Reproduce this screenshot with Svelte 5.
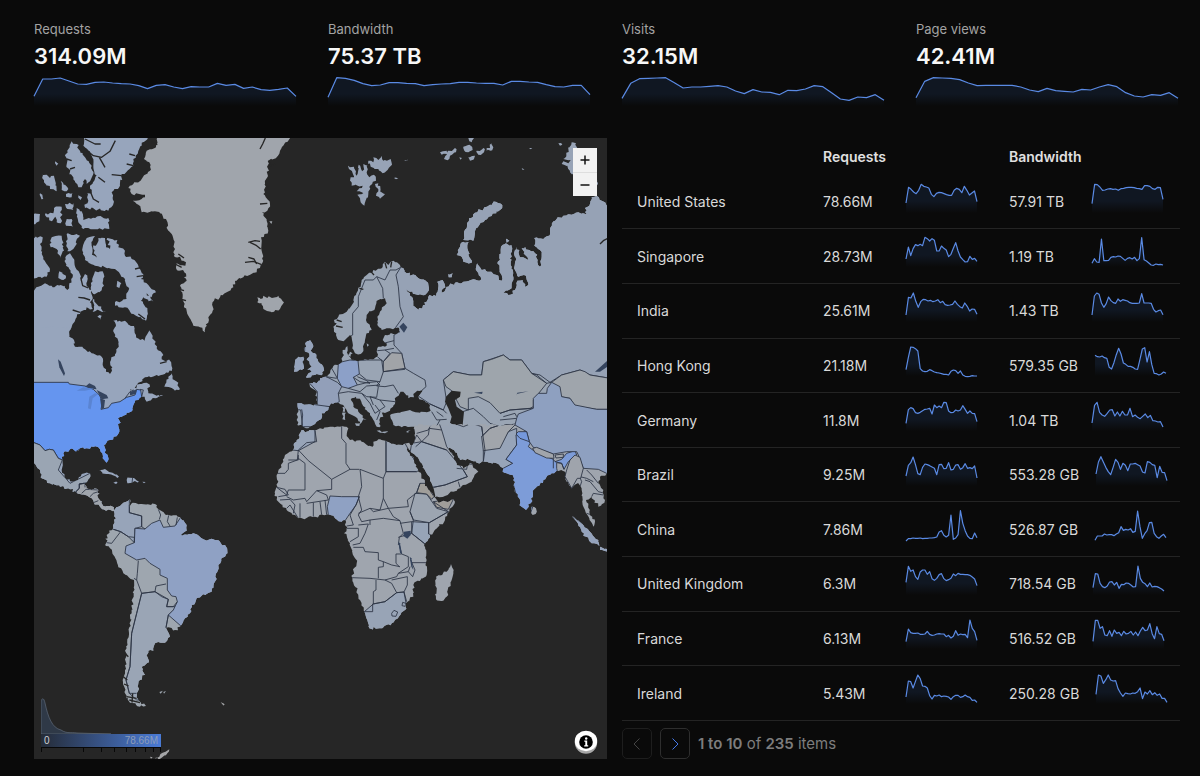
<script>
    let page = $state(1);

    const stats = [
        { label: 'Requests', value: '314.09M', points: [61, 9, 9, 6, 15, 24, 25, 19, 18, 21, 23, 24, 29, 38, 28, 26, 33, 38, 32, 33, 33, 22, 28, 25, 37, 33, 41, 43, 40, 36, 61] },
        { label: 'Bandwidth', value: '75.37 TB', points: [64, 5, 7, 13, 23, 29, 27, 20, 20, 22, 23, 29, 26, 24, 23, 19, 19, 21, 22, 22, 27, 16, 16, 18, 19, 26, 32, 33, 28, 28, 56] },
        { label: 'Visits', value: '32.15M', points: [67, 22, 8, 7, 6, 5, 20, 36, 33, 33, 31, 29, 33, 45, 53, 41, 48, 49, 56, 43, 44, 39, 29, 32, 50, 69, 73, 63, 65, 56, 73] },
        { label: 'Page views', value: '42.41M', points: [65, 16, 5, 6, 7, 11, 21, 29, 28, 28, 28, 28, 33, 42, 47, 37, 44, 46, 48, 40, 42, 33, 26, 32, 50, 60, 63, 56, 58, 50, 67] }
    ];

    const rows = [
        {
            country: 'United States', requests: '78.66M', bandwidth: '57.91 TB',
            reqPoints: [60, 13, 19, 27, 32, 22, 4, 10, 12, 15, 34, 41, 31, 28, 29, 32, 35, 37, 37, 22, 16, 19, 29, 10, 22, 36, 30, 24, 56],
            bwPoints: [62, 4, 5, 12, 22, 21, 18, 17, 19, 18, 22, 17, 16, 14, 13, 13, 14, 16, 17, 19, 8, 8, 10, 17, 19, 13, 14, 49]
        },
        {
            country: 'Singapore', requests: '28.73M', bandwidth: '1.19 TB',
            reqPoints: [66, 30, 56, 35, 23, 26, 22, 26, 1, 5, 12, 5, 10, 42, 42, 27, 34, 39, 59, 52, 34, 17, 42, 60, 68, 75, 74, 58, 67, 64, 73],
            bwPoints: [79, 65, 75, 76, 6, 71, 71, 70, 61, 59, 60, 57, 58, 64, 70, 64, 62, 66, 61, 71, 65, 2, 68, 72, 78, 84, 85, 81, 83, 82, 84]
        },
        {
            country: 'India', requests: '25.61M', bandwidth: '1.43 TB',
            reqPoints: [69, 16, 18, 3, 28, 46, 29, 22, 23, 27, 25, 29, 27, 23, 32, 28, 38, 40, 39, 37, 27, 37, 44, 48, 33, 43, 57, 51, 52, 67],
            bwPoints: [69, 12, 3, 7, 33, 46, 35, 15, 26, 32, 34, 21, 28, 23, 25, 27, 32, 34, 34, 34, 33, 5, 33, 33, 33, 34, 52, 60, 56, 54, 68]
        },
        {
            country: 'Hong Kong', requests: '21.18M', bandwidth: '579.35 GB',
            reqPoints: [71, 34, 3, 4, 8, 15, 68, 75, 77, 76, 71, 74, 78, 80, 81, 83, 85, 85, 87, 76, 72, 74, 82, 75, 87, 91, 92, 91, 89, 90, 90],
            bwPoints: [28, 32, 33, 30, 35, 37, 64, 69, 50, 26, 7, 24, 51, 55, 61, 61, 64, 69, 70, 40, 9, 5, 48, 17, 56, 82, 83, 87, 84, 78, 82]
        },
        {
            country: 'Germany', requests: '11.8M', bandwidth: '1.04 TB',
            reqPoints: [67, 26, 20, 23, 35, 37, 34, 29, 25, 24, 22, 39, 12, 20, 15, 20, 4, 5, 30, 35, 34, 27, 30, 27, 14, 25, 37, 30, 37, 38, 62],
            bwPoints: [66, 13, 4, 34, 42, 46, 37, 27, 26, 45, 33, 45, 31, 42, 42, 22, 47, 42, 49, 53, 46, 39, 50, 43, 59, 60, 63, 62, 78]
        },
        {
            country: 'Brazil', requests: '9.25M', bandwidth: '553.28 GB',
            reqPoints: [60, 28, 20, 3, 26, 53, 56, 34, 24, 26, 29, 33, 37, 56, 26, 25, 38, 37, 20, 42, 40, 27, 26, 40, 35, 23, 37, 35, 38, 30, 66],
            bwPoints: [54, 18, 2, 18, 34, 47, 56, 34, 10, 19, 40, 22, 28, 44, 24, 24, 22, 26, 30, 48, 51, 17, 19, 26, 28, 65, 31, 49, 50, 74]
        },
        {
            country: 'China', requests: '7.86M', bandwidth: '526.87 GB',
            reqPoints: [93, 86, 86, 84, 85, 85, 84, 86, 85, 85, 84, 84, 83, 81, 66, 62, 76, 81, 76, 15, 88, 84, 74, 2, 40, 62, 78, 85, 86, 69, 83],
            bwPoints: [91, 78, 78, 78, 72, 75, 74, 74, 77, 72, 68, 50, 61, 58, 60, 56, 67, 64, 3, 50, 85, 71, 62, 38, 37, 70, 80, 85, 78, 73, 83]
        },
        {
            country: 'United Kingdom', requests: '6.3M', bandwidth: '718.54 GB',
            reqPoints: [52, 4, 19, 15, 35, 43, 21, 15, 15, 28, 20, 41, 46, 40, 29, 26, 41, 47, 44, 40, 27, 32, 25, 28, 28, 29, 29, 31, 36, 42, 62],
            bwPoints: [68, 26, 27, 55, 65, 68, 63, 51, 50, 60, 52, 70, 58, 59, 54, 55, 60, 66, 65, 3, 40, 52, 56, 65, 54, 66, 64, 65, 68, 72, 78]
        },
        {
            country: 'France', requests: '6.13M', bandwidth: '516.52 GB',
            reqPoints: [68, 30, 41, 43, 43, 42, 46, 46, 45, 37, 46, 49, 48, 45, 44, 45, 45, 53, 49, 57, 52, 35, 49, 45, 47, 46, 56, 3, 28, 38, 64],
            bwPoints: [67, 4, 4, 28, 23, 48, 50, 35, 52, 33, 43, 40, 50, 37, 45, 43, 37, 48, 39, 50, 36, 25, 35, 33, 14, 44, 59, 23, 44, 46, 65]
        },
        {
            country: 'Ireland', requests: '5.43M', bandwidth: '250.28 GB',
            reqPoints: [69, 21, 23, 42, 22, 3, 14, 36, 37, 42, 65, 75, 64, 66, 63, 68, 66, 67, 69, 76, 68, 64, 64, 70, 68, 63, 68, 70, 79, 78, 85],
            bwPoints: [61, 3, 6, 28, 17, 3, 18, 21, 20, 44, 57, 67, 57, 59, 60, 57, 58, 53, 42, 74, 54, 60, 50, 62, 56, 64, 60, 73, 73, 85]
        }
    ];

    const linePath = (points, width) =>
        'M' + points.map((y, i) => `${((i * width) / (points.length - 1)).toFixed(1)} ${y}`).join('L');

    // Splits every long coast segment and shifts the new vertices a little
    const coast = (shapes, amount = 4) => {
        let seed = 7;
        const noise = () => {
            seed = (seed * 16807) % 2147483647;
            return seed / 2147483647 - 0.5;
        };
        return shapes.trim().split('|').map((shape) => {
            const pts = shape.trim().split(/\s+/).map((p) => p.split(',').map(Number));
            const out = [];
            pts.forEach(([x, y], i) => {
                const [nx, ny] = pts[(i + 1) % pts.length];
                const steps = Math.max(1, Math.round(Math.hypot(nx - x, ny - y) / 7));
                out.push(`${x} ${y}`);
                for (let s = 1; s < steps; s++) {
                    const t = s / steps;
                    out.push(`${(x + (nx - x) * t + noise() * amount * 2).toFixed(1)} ${(y + (ny - y) * t + noise() * amount * 2).toFixed(1)}`);
                }
            });
            return 'M' + out.join('L') + 'Z';
        }).join('');
    };

    // Every sheet of the map has its own origin, in thirds of a map unit
    const sheets = [
        {
            id: 'arctic', origin: [-4, -4], fill: '#97a5bc',
            land: `12,470 25,458 45,448 68,460 92,453 104,455 112,468 118,448 128,430 122,410 108,395 106,370 120,358 132,375 136,400 146,412 152,440 165,420 172,430 170,455 185,468 188,490 180,505 188,525 170,520 150,540 140,550 128,570 118,590 118,605 0,605 0,470
            |160,5 360,5 335,35 325,50 310,75 310,95 275,120 270,155 245,175 250,210 235,230 165,222 163,212 175,200 172,178 185,178 180,155 200,125 190,100 185,65 160,35
            |125,22 140,30 150,55 165,70 185,95 190,120 170,150 165,135 155,160 145,160 130,130 110,100 108,60
            |140,222 155,232 160,258 200,248 235,252 238,285 160,285 145,265
            |35,118 50,122 60,132 72,125 80,172 60,165 42,145
            |92,140 115,165 110,172 95,168|108,180 128,178 125,190 108,188|30,178 40,195 34,196|145,184 156,190 152,198|76,82 85,88 80,95
            |5,240 30,240 28,262 5,270|45,240 70,238 72,222 95,218 92,268 80,265 76,248 66,262 50,250|105,210 130,208 130,228 112,225|110,255 125,255 128,278 108,275
            |5,310 38,310 30,330 40,370 60,405 50,428 5,430|65,310 95,305 102,350 90,372 80,345 62,340|110,300 150,305 130,345 112,352|88,412 108,425 100,438 85,432
            |170,312 195,306 185,335 186,362 202,375 190,345 205,312 225,312 228,340 240,345 232,312 262,318 265,340 285,350 285,365 305,375 325,395 340,420 332,435 360,460 378,475 365,490 350,478 370,505 340,490 333,500 352,522 348,560 318,545 285,520 255,515 255,505 290,495 295,460 280,430 255,405 225,400 195,395 165,378 158,340
            |190,495 200,510 228,534 205,528 188,534|195,412 218,412 222,455 208,475 190,480 182,462|262,440 274,448 268,462 260,458|202,548 215,545 210,558`,
            countries: [],
            lines: [],
            inlets: ['M165 45L190 65L215 70L240 52L256 20', 'M208 70L225 100', 'M165 15L195 30L212 30', 'M180 170L190 195L207 205', 'M275 125L245 122', 'M205 130L225 145', 'M145 490L162 492L180 498', 'M128 528L150 535', 'M152 430L158 455L175 462', 'M110 75L125 80', 'M120 105L135 100', 'M315 65L298 60', 'M310 95L290 90', 'M335 400L315 405', 'M340 425L320 428', 'M325 540L345 555', 'M12 438L28 430']
        },
        {
            id: 'greenland', origin: [-4, -4], fill: '#a0a5ac',
            land: `385,5 378,40 350,50 342,75 358,85 360,110 335,135 310,150 295,162 305,180 345,182 345,190 318,200 308,200 325,212 335,235 365,232 390,238 408,255 415,290 425,300 435,345 432,365 450,368 455,380 468,385 466,395 440,388 438,402 468,418 462,430 470,440 450,455 458,490 462,520 475,545 490,575 510,580 525,595 535,550 548,530 552,500 570,490 590,475 610,460 615,440 640,430 680,415 690,402 698,385 695,350 693,310 715,290 710,260 695,235 712,230 720,210 700,180 712,130 715,80 740,70 750,50 785,5
            |682,490 692,495 700,485 712,492 745,485 762,505 750,525 725,535 700,525 695,508 682,505|718,262 727,262 724,270`,
            countries: [],
            lines: [],
            inlets: ['M690 45L698 30L706 12', 'M655 325L675 320L690 322', 'M660 325L680 335L692 345', 'M645 385L670 382L695 392', 'M655 370L672 375L680 390', 'M435 390L455 400', 'M445 360L462 372', 'M715 80L722 95L735 90', 'M705 150L718 165', 'M690 210L712 208', 'M445 465L462 470', 'M450 495L468 500', 'M365 25L382 32']
        },
        {
            id: 'north-america', origin: [-4, 192], fill: '#97a5bc',
            land: `0,-8 120,-8 118,20 132,30 135,50 160,55 185,70 215,80 218,105 228,125 240,132 246,122 243,90 258,70 265,40 256,15 250,0 258,-12 250,-28 285,-28 312,-12 318,15 330,30 345,32 352,12 357,0 372,30 380,55 400,75 395,88 420,92 427,115 415,128 385,138 345,142 325,158 300,185 330,162 350,158 360,170 352,175 355,190 385,195 400,195 378,205 350,215 345,208 335,200 325,210 310,225 308,240 290,248 275,260 264,265 272,278 264,282 268,305 240,330 222,345 225,365 235,390 230,398 218,385 212,365 205,352 190,350 170,355 150,355 145,362 120,358 100,370 97,390 95,420 105,445 130,455 145,450 155,432 180,430 178,445 162,462 170,475 205,480 205,505 220,528 252,532 256,542 220,538 192,518 185,505 150,492 120,478 90,470 60,460 35,445 30,420 5,395 0,338
            |403,170 415,140 425,130 428,148 445,158 448,180 435,182 425,174
            |200,422 225,417 250,430 278,440 262,444 235,432|290,450 300,443 315,446 327,455 305,458 292,460|250,458 263,458 258,462|337,455 347,456 342,460`,
            countries: [
                { fill: '#6595ef', d: 'M0 157H115L118 162L165 168L190 178L208 195L218 215L213 238L235 233L245 220L270 215L290 202L315 195L320 178L332 180L335 200L345 230L290 270L280 320L240 345L245 405L215 410L150 357L97 390L85 385L70 360L58 358L45 362L30 345L12 338H0Z' },
                { fill: '#9aa5b3', d: 'M0 338H12L30 345L45 362L58 358L70 360L85 385L97 390L85 420L120 460L200 420V450L162 460L148 462V475L138 485L100 500L0 420Z' },
                { fill: '#a0a5ac', d: 'M138 485L148 475V462L162 460L230 480L270 560L160 520Z' }
            ],
            lines: ['M285 205L300 185L312 180', 'M335 200L340 180L330 178', 'M138 485L148 475L148 462L162 460', 'M150 462L165 460L165 472', 'M155 490L168 478L205 480', 'M180 500L190 490L205 485', 'M190 518L205 512', 'M308 442L306 460'],
            inlets: ['M390 100L410 95'],
            lakes: ['M165 170L178 160L195 168L200 178L185 176Z', 'M200 180L230 195L235 205L215 208Z', 'M84 88L92 95L105 130L102 138L88 112Z', 'M210 205L225 210L222 235L215 238Z', 'M300 186L320 178L318 192L300 196Z']
        },
        {
            id: 'south-america', origin: [56, 342], fill: '#9ea6af',
            land: `72,92 85,80 100,68 120,58 118,80 128,68 150,72 195,72 205,88 230,105 270,112 290,135 290,152 275,165 310,160 340,178 375,180 405,195 412,210 405,230 385,255 378,300 365,335 320,355 305,375 300,400 285,415 270,440 255,450 228,443 240,470 225,488 195,490 190,512 175,512 172,530 175,548 155,560 165,585 150,600 140,640 145,660 168,678 150,680 120,668 105,640 98,600 105,570 108,500 125,400 132,300 100,280 85,262 60,205 48,198 50,165 70,145 78,115
            |208,636 218,632 212,641|220,636 228,633 222,641|393,667 404,673 399,675`,
            countries: [
                { fill: '#97a4b9', d: 'M75 60L118 58V98L155 108V140L135 145L133 188L115 170L92 155L60 145Z' },
                { fill: '#9aa5b5', d: 'M155 340L195 335L235 358L230 380H262L235 405L228 443L270 470L180 660H140L118 640L108 600L120 560L125 460L140 400Z' },
                { fill: '#8fa1c4', d: 'M135 145L165 147L185 130L210 120L220 142L255 138L272 112L430 170V220L400 320L330 380L275 440L235 405L250 390L262 365L258 350L245 348L232 330L232 295L210 285L210 268L180 250L165 235L140 240L105 220L108 198L133 188Z' }
            ],
            lines: ['M118 75V98L155 108V140', 'M155 140L165 147', 'M205 88L212 105L208 118', 'M236 106L232 125L240 138', 'M262 112L258 135', 'M50 188L65 190L92 155L72 148', 'M92 155L115 170L133 172V188', 'M145 242L142 280L140 300L155 340L195 335L198 318L228 312', 'M195 335L215 350L235 358L230 380L250 380L262 365', 'M235 405L228 443', 'M132 295L140 300', 'M155 340L140 400L125 460L120 560L108 600L118 640H140', 'M0 45L25 42'],
            inlets: ['M100 590L112 600', 'M102 612L116 618', 'M110 650L140 655', 'M118 660L150 668', 'M105 520L115 530', 'M275 165L290 155L306 158', 'M128 640L126 668']
        },
        {
            id: 'eurasia', origin: [236, 82], fill: '#9aa5b4',
            land: `1020,-43 995,-58 980,-73 965,-68 958,-43 945,-36 950,-18 925,-23 905,-16 880,-13 860,-3 845,12 840,32 838,47 820,57 793,54 793,77 810,90 815,110 810,140 803,120 795,100 778,90 765,80 755,85 775,120 750,112 748,90 740,80 735,90 738,120 735,150 742,168 762,165 775,195 765,200 758,180 742,182 735,210 715,225 700,218 720,208 730,180 725,140 722,100 724,75 705,72 692,90 690,120 682,130 695,165 695,182 680,165 660,155 635,150 622,130 618,150 632,170 628,182 610,178 580,185 555,188 530,200 515,218 525,195 518,180 502,185 503,215 498,228 478,225 465,255 445,270 430,258 425,230 408,208 420,215 445,225 465,225 477,210 470,185 440,170 410,160 392,142 390,135 370,122 355,135 345,125 335,145 310,150 290,165 275,180 272,200 258,225 252,245 230,275 205,290 192,300 200,310 190,320 198,345 205,360 225,360 240,345 248,380 255,400 272,402 280,385 285,360 290,340 305,330 300,320 288,300 290,285 315,265 325,240 345,235 350,250 335,270 322,290 322,315 335,330 360,325 385,322 388,335 370,342 345,345 338,360 350,370 345,380 325,380 320,395 322,410 300,418 268,422 245,420 235,405 232,378 218,390 218,425 205,435 190,438 180,460 165,470 150,475 140,490 118,490 120,500 138,512 142,555 120,552 82,550 85,570 80,600 82,615 100,620 115,625 135,612 150,600 155,580 175,570 180,555 205,548 220,555 235,580 262,595 270,612 280,598 290,600 265,575 250,560 245,535 258,530 275,550 300,580 310,600 320,620 332,618 328,600 340,590 335,578 360,572 375,552 380,530 400,515 415,535 432,532 430,522 458,510 445,530 480,555 482,572 450,578 420,570 390,578 365,582 362,595 370,615 395,622 425,620 440,625 435,640 435,660 1020,660
            |105,370 120,360 130,378 122,392 135,400 145,425 160,440 158,462 135,465 108,472 125,455 112,450 125,440 112,420 118,402 105,395|75,425 85,410 100,410 102,440 95,450 72,455
            |240,395 248,400 242,410 232,405|290,370 297,375 292,380|535,162 548,160 545,172 536,172|217,562 225,560 225,575 218,575|216,578 228,578 226,600 217,598|255,610 270,610 268,618|320,632 355,635 335,638|408,636 422,630 415,638|708,58 718,62 710,68
            |597,-5 615,-22 660,-46 680,-54 697,-44 693,-32 665,-12 645,0 628,15 615,40 610,62 580,60 582,45 590,25|580,65 596,66 592,85 605,128 580,125 575,110 560,105 570,80`,
            countries: [
                { fill: '#96a2b5', d: 'M1020 -120H560V130L392 142L378 165L385 200L390 260L400 290L375 325L390 335L372 345V375L395 400L405 445L430 460L465 480L468 500L440 525L480 552L520 570L530 545L520 480L550 455L600 465L635 465L640 425L700 405L720 420L755 420L785 460L810 465L840 487L875 465L930 450L960 465L1020 475Z' },
                { fill: '#95a3bb', d: 'M104 350H165V480H104V440L96 420L104 408Z' },
                { fill: '#95a3bb', d: 'M60 405H104V460H60Z' },
                { fill: '#8ca0c8', d: 'M205 432L218 425L240 420L264 422L268 462L250 472L262 495L235 505L215 500L202 475Z' },
                { fill: '#929fb9', d: 'M110 480L165 468L202 487L215 500L205 520L208 545L180 560H142V515Z' },
                { fill: '#94a3bd', d: 'M80 545L142 555L180 560L155 620H98L92 570L80 568Z' },
                { fill: '#a1a4a8', d: 'M340 425L365 398L395 400L405 445L340 455Z' },
                { fill: '#9fa5ac', d: 'M845 487L875 465L930 450L945 455L960 465L1020 475V568L980 568L915 558L900 535L870 530Z' },
                { fill: '#9ea5ac', d: 'M520 480L550 455L600 465H635L640 425L665 418L700 405L720 420L755 420L785 460L830 490L790 540V565L720 570L690 580L660 548L625 530L595 535V570L570 560L545 512L528 500Z' }
            ],
            lines: ['M392 142L378 150L360 150L345 180L320 170L310 180L285 180L265 230L265 260L248 280V345L240 350', 'M320 170L338 205L340 235', 'M340 370L372 362', 'M322 392L345 390L372 385', 'M322 410L340 425L360 400L345 390', 'M264 422L290 420L335 420L340 455L330 485L290 480L268 462', 'M340 455L405 448', 'M330 485L320 498L345 500L370 495L385 520', 'M262 470L290 482L300 490L270 485L250 472', 'M262 495L290 488L320 485L330 495L290 498L270 515L235 505', 'M205 520L235 515L275 520L290 530L320 532L325 500', 'M275 520L300 550L315 580L345 560L330 540L300 530', 'M330 540L375 545', 'M315 555L330 575L320 600', 'M300 530L310 555', 'M182 440L195 462L202 475', 'M168 470L200 475', 'M95 568L98 585L95 615', 'M480 552L520 570L530 580', 'M485 575L500 600L530 598', 'M500 575L520 590', 'M440 622L500 618L510 600', 'M578 575L610 565L640 590L660 610L690 620', 'M690 580L720 570L780 565L790 560', 'M700 590L735 580L740 590', 'M690 600L740 595L745 620', 'M640 630L690 620L735 612', 'M785 460L800 465L830 490L845 487', 'M82 660L105 630', 'M215 618L220 660'],
            inlets: ['M575 62L612 66', 'M1020 52L1000 62L990 72', 'M198 318L218 322', 'M200 300L215 305', 'M268 205L280 208', 'M300 152L312 165', 'M345 128L350 145', 'M365 125L362 142'],
            water: ['M528 530L545 512L572 515L570 530L555 540L560 560L582 575L578 615L555 618L540 608L545 590L535 565L525 545Z'],
            lakes: ['M388 320L400 308L412 322L402 338Z', 'M975 455L1020 415V435L990 455Z', 'M612 518L638 515L636 522Z', 'M738 528L742 518L775 514L740 522Z']
        },
        {
            id: 'africa-asia', origin: [236, 262], fill: '#9fa5ae',
            land: `435,75 435,110 428,135 410,130 380,135 350,125 325,118 310,125 308,140 295,138 275,125 240,120 230,108 235,85 215,78 150,85 135,90 105,97 95,90 80,120 70,150 45,165 40,185 20,225 25,245 15,280 20,300 50,330 85,355 135,350 175,343 195,355 215,365 226,360 230,385 222,400 240,430 255,475 260,490 245,530 270,600 285,640 298,685 340,682 365,670 405,630 408,610 430,590 430,555 470,525 470,480 462,435 480,405 525,360 555,305 550,298 505,308 492,290 465,250 445,215 432,180 410,148 412,143 428,160 450,185 480,235 492,270 495,292 520,290 570,265 605,245 625,215 600,190 580,205 560,195 548,165 535,145 552,150 570,180 600,180 620,188 645,185 680,190 700,205 698,215 715,222 728,225 735,265 755,320 768,330 782,310 788,275 820,240 845,220 860,212 885,215 890,245 905,265 925,250 935,270 938,300 945,330 970,380 975,365 958,335 948,300 965,290 985,320 1005,300 1000,270 985,250 990,230 1020,222 1020,75
            |543,492 550,515 530,590 520,602 498,598 500,570 498,530 530,515|785,320 798,325 797,342 788,345|905,350 930,365 960,395 985,420 988,438 965,430 935,395|990,440 1020,450 1020,456 990,450`,
            countries: [
                { fill: '#9aa4b3', d: 'M348 100V215H440L450 210L405 130Z' },
                { fill: '#9aa5b5', d: 'M425 130L455 125L530 150L580 210L592 230L525 255L490 262L420 160Z' },
                { fill: '#99a4b4', d: 'M500 50L530 62L580 80L605 70L635 80L645 150L640 195L570 190L530 140L515 90Z' },
                { fill: '#97a4b8', d: 'M640 150L690 135L715 95L740 85V135L708 178L728 190L700 215L640 190Z' },
                { fill: '#a1a5ab', d: 'M635 110L660 85L690 75L740 70L715 95L690 145L640 152Z' },
                { fill: '#97a4b8', d: 'M65 150L75 115L95 80L135 90V125L85 152Z' },
                { fill: '#8fa1c3', d: 'M175 345L172 320L180 288L215 290L268 290L258 315L240 340L220 370H190Z' },
                { fill: '#98a4b6', d: 'M283 635L310 612L345 605L380 578L402 576L410 620L435 620L380 700H290Z' },
                { fill: '#97a4b7', d: 'M425 365L476 368V402L495 410L465 432L425 400Z' },
                { fill: '#9ca5b1', d: 'M435 280L470 282L500 325L535 335L478 368L430 360L420 335Z' },
                { fill: '#a09e9a', d: 'M440 278L450 250H465L492 290L485 298L470 282Z' },
                { fill: '#a09e9a', d: 'M490 305L550 298L535 328L500 322Z' },
                { fill: '#95a3bc', d: 'M895 340L1020 430V465H985L895 370Z' },
                { fill: '#7d9cd8', d: 'M690 210L728 190L708 178L740 135L738 105L768 95L780 130L775 140L795 155L850 178L855 185L875 178L890 160L915 152L920 165L895 185L882 208L875 190L860 188V205L868 240L795 300L780 345H755L725 235H700Z' }
            ],
            overlay: [
                { fill: '#8ea0c0', d: 'M740 55L745 42L790 25L790 -5L805 -20H830L832 -35L845 -53L870 -40L875 -10L900 -5L915 15L980 28H1020V225L985 208L940 205L925 165L920 155L890 155L850 162L790 142L778 125L770 95L735 75Z' },
                { fill: '#a1a5ab', d: 'M788 145L800 142L850 162L852 175L830 174L795 158Z' },
                { fill: '#a1a5ab', d: 'M855 165L880 162V172L858 174Z' },
                { fill: '#9fa4ac', d: 'M915 165L930 172L940 205L932 235L922 235L905 265L885 230L890 210L900 180Z' },
                { fill: '#7598dc', d: 'M738 102L745 95L770 95L778 125L750 115Z' }
            ],
            lines: ['M135 92L140 125L110 128L85 150L82 180L55 190V208L45 220H20', 'M85 150L115 182L185 238L240 208', 'M85 165V180H55', 'M105 190V270H55L50 285L20 262', 'M105 190L85 175', 'M215 78V115L228 130V190L240 208H268', 'M348 100V215H440', 'M348 215L340 235L270 208L272 225L275 260L265 290', 'M340 235V295L330 330L300 325L265 340', 'M185 238V268L140 272L110 305L105 295L70 300L50 290', 'M20 262L45 268L55 285L25 290', 'M140 272L170 285L175 300L110 310', 'M30 300L60 298L75 315L70 340', 'M50 325L60 315L85 355', 'M90 310V352', 'M130 308V350', 'M150 305L155 345', 'M165 300L170 345', 'M268 290L258 315L240 345L250 375L230 378', 'M265 290L275 330L265 345L275 365L300 360L300 375', 'M340 295L355 325L415 320L412 300L440 278', 'M300 325L310 335L355 325L370 350L390 362', 'M300 360L340 355L390 362L400 400L388 412L385 435', 'M440 278L450 250', 'M420 335L430 360L425 400L385 412', 'M425 365L390 370', 'M476 368V402', 'M478 368L535 335L490 305', 'M425 400L465 432', 'M230 385H265V410L240 425', 'M265 375L295 372L285 400L270 430L248 435', 'M250 442H280L285 455L325 458V480L340 485V500L325 502V535', 'M245 533L300 535L345 540L380 530L385 520L415 515L420 500', 'M388 435L395 462H378V490L388 500', 'M340 485L365 495L390 500', 'M395 462L415 470V500L385 520', 'M425 488H470', 'M415 515L428 530L435 510L422 480', 'M318 540V570L310 575V612', 'M345 540L365 550L380 578', 'M365 540L412 530V555L402 576', 'M380 578L402 576L410 605', 'M283 635H308V612L345 605L380 578', 'M365 640L372 631L383 636L378 649L366 648Z', 'M398 607L408 610L405 619L396 617Z', 'M437 140L455 125L530 150', 'M455 125L440 105L430 130', 'M440 100L475 90L480 80', 'M455 125L475 105L478 85L515 90', 'M490 262L525 255L592 230L580 210', 'M565 245L570 262', 'M560 205L590 208L592 195', 'M635 80L645 150L640 185', 'M635 110L660 85L690 75L740 70', 'M850 178V205', 'M855 185L875 190L882 208', 'M940 205L925 220L935 245L930 260', 'M945 240L960 245L985 275L1005 280', 'M950 210L965 225L985 250', 'M930 230L950 235L970 245', 'M965 290L970 280L1000 285', 'M950 340L965 345'],
            inlets: [],
            lakes: ['M402 395L422 392V405L412 416L400 408Z', 'M385 425L390 430L396 462L390 458Z', 'M419 470L424 475L430 510L424 500Z']
        },
        {
            id: 'svalbard', origin: [296, -4], fill: '#97a3b6',
            land: `55,95 72,98 80,125 86,92 98,120 100,90 112,92 110,115 118,130 132,122 138,140 120,155 115,180 103,215 92,205 82,182 100,178 80,172 98,155 65,155 62,130 72,130
            |115,80 130,85 130,70 145,78 155,65 160,80 182,75 186,92 170,110 158,118 145,105 122,98|135,150 145,148 150,172 165,180 150,194 138,185 145,172
            |330,55 350,50 352,60 335,62|355,50 375,42 378,55 360,65 358,75 342,75 350,62|400,38 418,32 428,48 415,55 403,50|415,12 432,12 426,25 418,22|440,50 460,42 462,55 445,62|470,42 480,42 485,28 490,40 482,50 470,50|415,70 435,65 432,75 420,80|388,70 396,72 391,77
            |725,25 738,28 745,60 735,120 720,115 712,95 695,90 700,82 715,88 722,78 700,75|222,78 234,76 228,81|192,132 205,133 198,136|597,42 607,42 602,46|685,28 697,32 690,35|575,102 585,106 578,108|800,135 804,150 800,155`,
            countries: [],
            lines: [],
            inlets: []
        },
        {
            id: 'antarctic', origin: [-4, 552], fill: '#a5a6a8',
            land: '375,204 388,200 398,188 418,178 412,190 395,203 385,208|360,200 368,202 363,206|572,37 584,43 580,47',
            countries: [],
            lines: [],
            inlets: []
        }
    ];
</script>

{#snippet sparkline(points, width, height)}
    <svg class="spark" viewBox="0 0 {width} {height}" preserveAspectRatio="none" aria-hidden="true">
        <path d="{linePath(points, width)}V{height}H0Z" fill="url(#spark-fade)" />
        <path class="spark-line" d={linePath(points, width)} />
    </svg>
{/snippet}

<svg class="defs" width="0" height="0" aria-hidden="true">
    <defs>
        <linearGradient id="spark-fade" gradientUnits="userSpaceOnUse" x1="0" y1="0" x2="0" y2="90">
            <stop offset="0.6" stop-color="#101722" />
            <stop offset="1" stop-color="#0a0a0a" />
        </linearGradient>
    </defs>
</svg>

<main>
    <section class="stats">
        {#each stats as stat (stat.label)}
            <div class="stat">
                <span class="label">{stat.label}</span>
                <strong>{stat.value}</strong>
                {@render sparkline(stat.points, 786, 90)}
            </div>
        {/each}
    </section>

    <section class="panels">
        <div class="map">
            <svg class="world" viewBox="0 0 573 621" preserveAspectRatio="xMidYMid slice" role="img" aria-label="Requests by country">
                {#each sheets as sheet (sheet.id)}
                    {@const land = coast(sheet.land)}
                    <g transform="translate({sheet.origin.join(' ')}) scale(0.33333)">
                        <clipPath id="clip-{sheet.id}"><path d={land} /></clipPath>
                        <path d={land} fill={sheet.fill} />
                        <g clip-path="url(#clip-{sheet.id})">
                            {#each sheet.countries as country}
                                <path class="country" d={country.d} fill={country.fill} />
                            {/each}
                            {#each sheet.lines as line}
                                <path class="border" d={line} />
                            {/each}
                        </g>
                        {#each sheet.overlay ?? [] as country}
                            <path class="country" d={country.d} fill={country.fill} />
                        {/each}
                        {#each sheet.inlets as inlet}
                            <path class="inlet" d={inlet} />
                        {/each}
                        {#each sheet.water ?? [] as sea}
                            <path d={sea} fill="#262626" />
                        {/each}
                        {#each sheet.lakes ?? [] as lake}
                            <path d={lake} fill="#35445e" />
                        {/each}
                        {#if sheet.id === 'north-america'}
                            <path d="M140 182L160 172L192 176L165 182Z M178 200L195 190L205 192L188 205L182 238L174 235Z" fill="#5a84d2" />
                        {/if}
                    </g>
                {/each}
            </svg>

            <div class="zoom">
                <button aria-label="Zoom in"><svg viewBox="0 0 24 24"><path d="M12 7.5v9M7.5 12h9" /></svg></button>
                <button aria-label="Zoom out"><svg viewBox="0 0 24 24"><path d="M7.5 12h9" /></svg></button>
            </div>

            <div class="legend">
                <svg class="histogram" viewBox="0 0 120 36" preserveAspectRatio="none" aria-hidden="true">
                    <path d="M0 36V4C1 -1 3 0 4 5C7 19 11 30 20 32C26 36 30 34 36 35L70 36Z" />
                </svg>
                <div class="scale"><span>0</span><span>78.66M</span></div>
                <svg class="ticks" viewBox="0 0 120 5" preserveAspectRatio="none" aria-hidden="true">
                    <path d="M0 .5H120M.5 0V5M42.5 0V5M60.5 0V5M73.5 0V5M85.5 0V5M94.5 0V5M104.5 0V5M112.5 0V5M119.5 0V5" />
                </svg>
            </div>

            <button class="info" aria-label="Map attribution">
                <svg viewBox="0 0 24 24">
                    <circle cx="12" cy="12.5" r="11.2" fill="#a8a8a8" />
                    <ellipse cx="12" cy="11" rx="11.2" ry="10.2" fill="#fff" />
                    <circle cx="12" cy="12" r="6.8" />
                    <path d="M10.3 10.6h2.9v4.6h1v1.2h-4v-1.2h1.1v-3.4h-1z" fill="#fff" />
                    <circle cx="12.2" cy="8.5" r="1.2" fill="#fff" />
                </svg>
            </button>
        </div>

        <div class="countries">
            <table>
                <thead>
                    <tr>
                        <th aria-label="Country"></th>
                        <th>Requests</th>
                        <th>Bandwidth</th>
                    </tr>
                </thead>
                <tbody>
                    {#each rows as row (row.country)}
                        <tr>
                            <td>{row.country}</td>
                            <td>
                                <div class="metric">
                                    <span>{row.requests}</span>
                                    {@render sparkline(row.reqPoints, 213, 114)}
                                </div>
                            </td>
                            <td>
                                <div class="metric">
                                    <span>{row.bandwidth}</span>
                                    {@render sparkline(row.bwPoints, 213, 114)}
                                </div>
                            </td>
                        </tr>
                    {/each}
                </tbody>
            </table>

            <nav class="pager" aria-label="Pagination">
                <button aria-label="Previous page" disabled={page === 1} onclick={() => (page -= 1)}>
                    <svg viewBox="0 0 16 16"><path d="M10.5 2.5L5 8l5.5 5.5" /></svg>
                </button>
                <button aria-label="Next page" onclick={() => (page += 1)}>
                    <svg viewBox="0 0 16 16"><path d="M5.5 2.5L11 8l-5.5 5.5" /></svg>
                </button>
                <p><b>1 to 10</b> of <b>235</b> items</p>
            </nav>
        </div>
    </section>
</main>

<style>
:global(body) {
    background: #0a0a0a;
}
main {
    padding: 20px 20px 17px 34px;
    color: #d9d9d9;
    font-family: Inter, "Liberation Sans", sans-serif;
    font-size: 14px;
}
.defs {
    position: absolute;
}
.stats {
    display: grid;
    grid-template-columns: repeat(4, 1fr);
    gap: 32px;
    padding-right: 2px;
}
.stat {
    display: flex;
    flex-direction: column;
}
.label {
    color: #a3a3a3;
    font-size: 13px;
    line-height: 18px;
}
.stat strong {
    color: #f7f7f7;
    font-size: 22px;
    font-weight: 600;
    line-height: 36px;
}
.spark {
    display: block;
    overflow: visible;
}
.stat .spark {
    width: 100%;
    height: 30px;
    margin-top: 2px;
}
.spark-line {
    fill: none;
    stroke: #5a8ae4;
    stroke-width: 1.2px;
    stroke-linejoin: round;
    vector-effect: non-scaling-stroke;
}
.panels {
    display: grid;
    grid-template-columns: 573fr 558fr;
    gap: 15px;
    margin-top: 32px;
}
.map {
    position: relative;
    min-height: 300px;
    background: #262626;
    overflow: hidden;
}
.world {
    position: absolute;
    width: 100%;
    height: 100%;
}
.country,
.border {
    stroke: #2c3444;
    stroke-width: 2.6;
    stroke-linejoin: round;
}
.border {
    fill: none;
}
.inlet {
    fill: none;
    stroke: #262626;
    stroke-width: 4;
    stroke-linejoin: round;
}
.zoom {
    position: absolute;
    top: 10px;
    right: 10px;
    display: flex;
    flex-direction: column;
}
.zoom button {
    width: 24px;
    height: 24px;
    padding: 0;
    border: 0;
    background: #f2f2f2;
}
.zoom button + button {
    border-top: 1px solid #dedede;
}
.zoom svg {
    display: block;
    width: 24px;
    fill: none;
    stroke: #111;
    stroke-width: 1.5;
}
.legend {
    position: absolute;
    bottom: 7px;
    left: 7px;
    width: 120px;
}
.histogram {
    display: block;
    width: 100%;
    height: 36px;
}
.histogram path {
    fill: #2f3947;
    stroke: #5e6a7a;
    stroke-width: 0.7;
}
.scale {
    display: flex;
    justify-content: space-between;
    padding: 0 3px;
    background: linear-gradient(90deg, #252c38, #4a7bd6);
    color: #8d9db8;
    font-family: "Liberation Sans", sans-serif;
    font-size: 10px;
    line-height: 13px;
}
.scale span:first-child {
    color: #d0d0d0;
}
.ticks {
    display: block;
    width: 100%;
    height: 5px;
}
.ticks path {
    stroke: #080808;
}
.info {
    position: absolute;
    right: 9px;
    bottom: 5px;
    width: 24px;
    height: 24px;
    padding: 0;
    border: 0;
    background: none;
}
.info svg {
    display: block;
}
table {
    width: 100%;
    height: 583px;
    border-collapse: collapse;
    table-layout: fixed;
}
th {
    height: 37px;
    padding: 0 15px;
    color: #e0e0e0;
    font-weight: 600;
    text-align: left;
}
td {
    padding: 0 0 0 15px;
    border-bottom: 1px solid #242424;
}
.metric {
    display: flex;
    align-items: center;
    gap: 17px;
    white-space: nowrap;
}
.metric span {
    min-width: 66px;
}
.metric .spark {
    flex: none;
    width: 71px;
    height: 38px;
}
.pager {
    display: flex;
    align-items: center;
    gap: 8px;
    margin-top: 7px;
    color: #7d7d7d;
    font-size: 15px;
}
.pager button {
    display: grid;
    place-items: center;
    width: 30px;
    height: 31px;
    padding: 0;
    border: 1px solid #2e2e2e;
    border-radius: 5px;
    background: #0a0a0a;
    color: #4478ea;
}
.pager button:disabled {
    border-color: #1e1e1e;
    color: #444;
}
.pager svg {
    width: 16px;
    fill: none;
    stroke: currentColor;
}
.pager p {
    margin: 0;
}
.pager b {
    font-weight: 600;
}
</style>
